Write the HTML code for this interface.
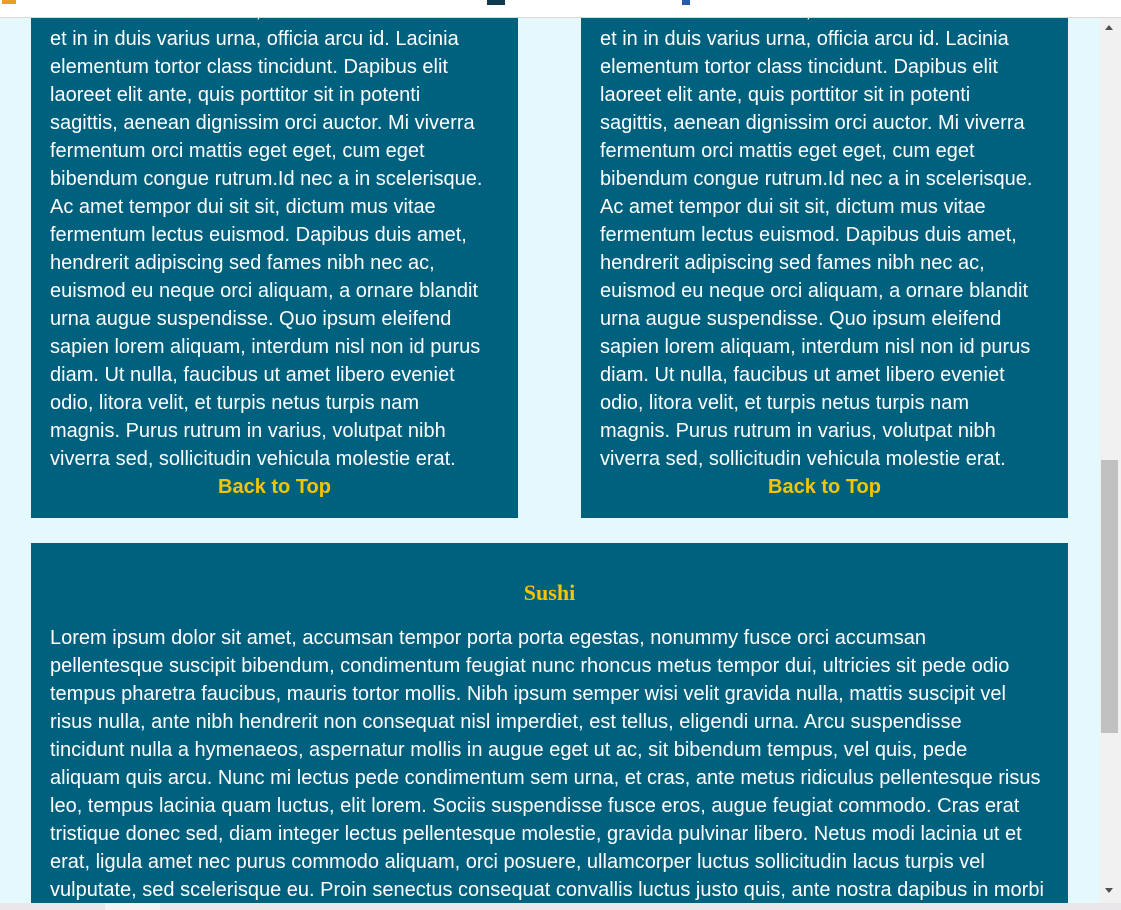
<!DOCTYPE html>
<html><head><meta charset="utf-8"><style>
html,body{margin:0;padding:0;width:1121px;height:910px;overflow:hidden;background:#e4f8fd;font-family:"Liberation Sans",sans-serif;}
.top{position:absolute;z-index:5;left:0;top:0;width:1121px;height:17px;background:#fff;border-bottom:1px solid #d8d8d8;}
.box{position:absolute;background:#00617f;color:#fff;overflow:hidden;}
.l{position:absolute;left:19px;white-space:nowrap;font-size:20px;line-height:28px;letter-spacing:0;}
.btt{position:absolute;left:0;right:0;text-align:center;color:#f7c500;font-weight:bold;font-size:20px;line-height:28px;}
.sb{position:absolute;left:1100px;top:18px;width:21px;height:885px;background:#f1f1f1;}
.thumb{position:absolute;left:1101px;top:460px;width:17px;height:273px;background:#c1c1c1;}
.bot{position:absolute;left:0;top:903px;width:1121px;height:7px;background:#e8e6e8;}
</style></head><body>
<div class="top">
<div style="position:absolute;left:2px;top:0;width:14px;height:4px;background:#e8a020"></div>
<div style="position:absolute;left:487px;top:0;width:18px;height:5px;background:#0d3a4f"></div>
<div style="position:absolute;left:682px;top:0;width:8px;height:5px;background:#2a5caa"></div>
</div>

<div class="box" style="left:31px;top:0;width:487px;height:518px;">
<div class="l" style="top:-3px">et in in duis varius urna, officia arcu id. Lacinia</div>
<div class="l" style="top:25px">et in in duis varius urna, officia arcu id. Lacinia</div>
<div class="l" style="top:53px">elementum tortor class tincidunt. Dapibus elit</div>
<div class="l" style="top:81px">laoreet elit ante, quis porttitor sit in potenti</div>
<div class="l" style="top:109px">sagittis, aenean dignissim orci auctor. Mi viverra</div>
<div class="l" style="top:137px">fermentum orci mattis eget eget, cum eget</div>
<div class="l" style="top:165px">bibendum congue rutrum.Id nec a in scelerisque.</div>
<div class="l" style="top:193px">Ac amet tempor dui sit sit, dictum mus vitae</div>
<div class="l" style="top:221px">fermentum lectus euismod. Dapibus duis amet,</div>
<div class="l" style="top:249px">hendrerit adipiscing sed fames nibh nec ac,</div>
<div class="l" style="top:277px">euismod eu neque orci aliquam, a ornare blandit</div>
<div class="l" style="top:305px">urna augue suspendisse. Quo ipsum eleifend</div>
<div class="l" style="top:333px">sapien lorem aliquam, interdum nisl non id purus</div>
<div class="l" style="top:361px">diam. Ut nulla, faucibus ut amet libero eveniet</div>
<div class="l" style="top:389px">odio, litora velit, et turpis netus turpis nam</div>
<div class="l" style="top:417px">magnis. Purus rutrum in varius, volutpat nibh</div>
<div class="l" style="top:445px">viverra sed, sollicitudin vehicula molestie erat.</div>
<div class="btt" style="top:473px">Back to Top</div>
</div>

<div class="box" style="left:581px;top:0;width:487px;height:518px;">
<div class="l" style="top:-3px">et in in duis varius urna, officia arcu id. Lacinia</div>
<div class="l" style="top:25px">et in in duis varius urna, officia arcu id. Lacinia</div>
<div class="l" style="top:53px">elementum tortor class tincidunt. Dapibus elit</div>
<div class="l" style="top:81px">laoreet elit ante, quis porttitor sit in potenti</div>
<div class="l" style="top:109px">sagittis, aenean dignissim orci auctor. Mi viverra</div>
<div class="l" style="top:137px">fermentum orci mattis eget eget, cum eget</div>
<div class="l" style="top:165px">bibendum congue rutrum.Id nec a in scelerisque.</div>
<div class="l" style="top:193px">Ac amet tempor dui sit sit, dictum mus vitae</div>
<div class="l" style="top:221px">fermentum lectus euismod. Dapibus duis amet,</div>
<div class="l" style="top:249px">hendrerit adipiscing sed fames nibh nec ac,</div>
<div class="l" style="top:277px">euismod eu neque orci aliquam, a ornare blandit</div>
<div class="l" style="top:305px">urna augue suspendisse. Quo ipsum eleifend</div>
<div class="l" style="top:333px">sapien lorem aliquam, interdum nisl non id purus</div>
<div class="l" style="top:361px">diam. Ut nulla, faucibus ut amet libero eveniet</div>
<div class="l" style="top:389px">odio, litora velit, et turpis netus turpis nam</div>
<div class="l" style="top:417px">magnis. Purus rutrum in varius, volutpat nibh</div>
<div class="l" style="top:445px">viverra sed, sollicitudin vehicula molestie erat.</div>
<div class="btt" style="top:473px">Back to Top</div>
</div>

<div class="box" style="left:31px;top:543px;width:1037px;height:367px;">
<div style="position:absolute;left:0;right:0;top:36px;text-align:center;color:#f7c500;font-family:'Liberation Serif',serif;font-weight:bold;font-size:22px;line-height:28px;">Sushi</div>
<div class="l" style="top:81px">Lorem ipsum dolor sit amet, accumsan tempor porta porta egestas, nonummy fusce orci accumsan</div>
<div class="l" style="top:109px">pellentesque suscipit bibendum, condimentum feugiat nunc rhoncus metus tempor dui, ultricies sit pede odio</div>
<div class="l" style="top:137px">tempus pharetra faucibus, mauris tortor mollis. Nibh ipsum semper wisi velit gravida nulla, mattis suscipit vel</div>
<div class="l" style="top:165px">risus nulla, ante nibh hendrerit non consequat nisl imperdiet, est tellus, eligendi urna. Arcu suspendisse</div>
<div class="l" style="top:193px">tincidunt nulla a hymenaeos, aspernatur mollis in augue eget ut ac, sit bibendum tempus, vel quis, pede</div>
<div class="l" style="top:221px">aliquam quis arcu. Nunc mi lectus pede condimentum sem urna, et cras, ante metus ridiculus pellentesque risus</div>
<div class="l" style="top:249px">leo, tempus lacinia quam luctus, elit lorem. Sociis suspendisse fusce eros, augue feugiat commodo. Cras erat</div>
<div class="l" style="top:277px">tristique donec sed, diam integer lectus pellentesque molestie, gravida pulvinar libero. Netus modi lacinia ut et</div>
<div class="l" style="top:305px">erat, ligula amet nec purus commodo aliquam, orci posuere, ullamcorper luctus sollicitudin lacus turpis vel</div>
<div class="l" style="top:333px">vulputate, sed scelerisque eu. Proin senectus consequat convallis luctus justo quis, ante nostra dapibus in morbi</div>
</div>

<div class="sb"></div>
<div class="thumb"></div>
<div style="position:absolute;left:1105px;top:25px;width:0;height:0;border-left:4px solid transparent;border-right:4px solid transparent;border-bottom:5px solid #505050"></div>
<div style="position:absolute;left:1105px;top:888px;width:0;height:0;border-left:4px solid transparent;border-right:4px solid transparent;border-top:5px solid #505050"></div>
<div class="bot"><div style="position:absolute;left:105px;top:0;width:55px;height:7px;background:#f4f4f4"></div></div>
</body></html>
